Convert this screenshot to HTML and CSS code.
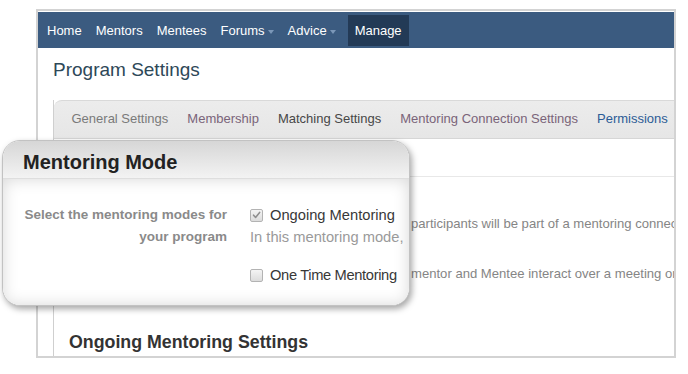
FILE: index.html
```html
<!DOCTYPE html>
<html lang="en">
<head>
<meta charset="utf-8">
<title>Program Settings</title>
<link rel="stylesheet" href="styles.css">
</head>
<body>
<div class="frame">
  <nav class="topnav">
    <a class="nav-item">Home</a>
    <a class="nav-item">Mentors</a>
    <a class="nav-item">Mentees</a>
    <a class="nav-item">Forums<span class="caret"></span></a>
    <a class="nav-item">Advice<span class="caret"></span></a>
    <a class="nav-item active">Manage</a>
  </nav>
  <h1 class="page-title">Program Settings</h1>
  <div class="panel">
    <div class="tabs">
      <a class="tab tab-grey">General Settings</a>
      <a class="tab tab-visited">Membership</a>
      <a class="tab tab-dark">Matching Settings</a>
      <a class="tab tab-visited">Mentoring Connection Settings</a>
      <a class="tab tab-blue">Permissions</a>
    </div>
    <div class="section-head"></div>
    <p class="bg-row first">participants will be part of a mentoring connection for a period of time</p>
    <p class="bg-row second">mentor and Mentee interact over a meeting or more</p>
    <h2 class="section-title">Ongoing Mentoring Settings</h2>
  </div>
</div>

<div class="callout">
  <div class="callout-head">Mentoring Mode</div>
  <div class="callout-body">
    <div class="callout-label">Select the mentoring modes for<br>your program</div>
    <div class="callout-options">
      <div class="option">
        <span class="checkbox">
          <svg width="12" height="12" viewBox="0 0 12 12"><path d="M2.8 6.2 L5 8.6 L9.4 3.2" fill="none" stroke="#8f8f8f" stroke-width="1.7" stroke-linecap="round" stroke-linejoin="round"/></svg>
        </span>
        <span class="option-text">Ongoing Mentoring</span>
      </div>
      <div class="option-desc">In this mentoring mode,</div>
      <div class="option second-option">
        <span class="checkbox"></span>
        <span class="option-text tight">One Time Mentoring</span>
      </div>
    </div>
  </div>
</div>
</body>
</html>
```

FILE: styles.css
```css
* { box-sizing: border-box; }

html, body {
  margin: 0;
  padding: 0;
  background: #ffffff;
  font-family: "Liberation Sans", Arial, sans-serif;
}

body {
  position: relative;
  width: 688px;
  height: 374px;
  overflow: hidden;
}

.frame {
  margin: 9px 0 0 36px;
  width: 640px;
  height: 349px;
  border: 2px solid #d3d3d3;
  padding-top: 1px;
  overflow: hidden;
}

.topnav {
  display: flex;
  align-items: center;
  height: 36px;
  padding-left: 2px;
  background: #3b5b80;
}

.nav-item {
  display: flex;
  align-items: center;
  height: 31px;
  padding: 0 7px;
  color: #ffffff;
  font-size: 13px;
  text-decoration: none;
}

.caret {
  display: inline-block;
  margin-left: 3px;
  margin-top: 3px;
  width: 0;
  height: 0;
  border-left: 3.5px solid transparent;
  border-right: 3.5px solid transparent;
  border-top: 4px solid #7b97b8;
}

.nav-item.active {
  margin-left: 5px;
  background: #233a56;
}

.page-title {
  margin: 11px 0 0 15px;
  font-size: 19px;
  line-height: 22px;
  font-weight: normal;
  color: #2e4858;
}

.panel {
  margin: 19px 0 0 15px;
  height: 300px;
  border-left: 1px solid #cfcfcf;
}

.tabs {
  display: flex;
  height: 39px;
  padding: 0 0 2px 8px;
  background: linear-gradient(#ececec, #e6e6e6);
  border-top: 1px solid #d9d9d9;
  border-bottom: 1px solid #d6d6d6;
  border-top-left-radius: 8px;
}

.tab {
  padding: 0 9.5px;
  font-size: 13px;
  line-height: 35px;
  white-space: nowrap;
}

.tab-grey { color: #7a7a7a; }
.tab-visited { color: #7a6479; }
.tab-dark { color: #474747; }
.tab-blue { color: #2c5c96; }

.section-head {
  height: 38px;
  margin-left: 15px;
  border-bottom: 1px solid #e8e8e8;
}

.bg-row {
  margin: 0;
  padding-left: 357px;
  font-size: 13.1px;
  line-height: 20px;
  color: #858585;
  white-space: nowrap;
  overflow: hidden;
}

.bg-row.first { margin-top: 37px; }
.bg-row.second { margin-top: 30px; }

.section-title {
  margin: 47px 0 0 15px;
  font-size: 17.8px;
  line-height: 22px;
  font-weight: bold;
  color: #333333;
}

/* magnified callout */
.callout {
  position: absolute;
  left: 2px;
  top: 140px;
  width: 408px;
  height: 166px;
  border: 1px solid #c2c2c2;
  border-radius: 18px;
  background: #ffffff;
  box-shadow: 2px 3px 6px rgba(0, 0, 0, 0.35);
  overflow: hidden;
}

.callout-head {
  height: 38px;
  padding: 10px 0 0 20px;
  font-size: 20px;
  line-height: 23px;
  font-weight: bold;
  color: #222222;
  background: linear-gradient(#d6d6d6, #f3f3f3);
  border-bottom: 1px solid #dedede;
}

.callout-body {
  display: flex;
  height: 126px;
  padding-top: 25px;
  background: #ffffff;
  box-shadow: inset 0 0 16px rgba(0, 0, 0, 0.16);
}

.callout-label {
  width: 224px;
  text-align: right;
  font-size: 13.5px;
  line-height: 22px;
  font-weight: bold;
  color: #8a8a8a;
}

.callout-options {
  margin-left: 23px;
}

.option {
  display: flex;
  align-items: center;
  height: 22px;
}

.second-option {
  margin-top: 16px;
}

.checkbox {
  display: inline-flex;
  align-items: center;
  justify-content: center;
  width: 13px;
  height: 13px;
  border: 1px solid #b3b3b3;
  border-radius: 2px;
  background: linear-gradient(#f4f4f4, #dcdcdc);
}

.option-text {
  margin-left: 7px;
  font-size: 14.7px;
  color: #383838;
  white-space: nowrap;
}

.option-text.tight {
  letter-spacing: -0.35px;
}

.option-desc {
  font-size: 14.7px;
  line-height: 22px;
  color: #9a9a9a;
  white-space: nowrap;
}
```
